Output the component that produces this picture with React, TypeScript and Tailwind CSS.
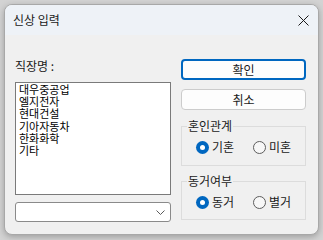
const FONT = { fontFamily: '"Noto Sans CJK KR", "Noto Sans", sans-serif' };

const COMPANIES = ['대우중공업', '엘지전자', '현대건설', '기아자동차', '한화화학', '기타'];

function Radio({ checked, label }: { checked: boolean; label: string }) {
  return (
    <div className="flex items-center gap-[3px] whitespace-nowrap">
      {checked ? (
        <div className="flex size-[13px] shrink-0 items-center justify-center rounded-full bg-[#0067c0]">
          <div className="size-[5px] rounded-full bg-white" />
        </div>
      ) : (
        <div className="size-[13px] shrink-0 rounded-full border border-[#5d5d5d] bg-[#f7f7f7]" />
      )}
      <span className="text-[12px] leading-[14px] text-[#1a1a1a]">{label}</span>
    </div>
  );
}

function GroupBox({ title, h, items }: { title: string; h: string; items: [string, boolean][] }) {
  return (
    <div className={`relative border border-[#dcdcdc] ${h}`}>
      <span className="absolute left-[5px] top-[-8px] bg-[#f0f0f0] px-[1px] text-[12px] leading-[14px] text-[#1a1a1a]">
        {title}
      </span>
      <div className="flex pl-[14px] pt-[13px]">
        {items.map(([label, checked]) => (
          <div key={label} className="w-[57px] shrink-0">
            <Radio checked={checked} label={label} />
          </div>
        ))}
      </div>
    </div>
  );
}

export default function App() {
  return (
    <div className="h-[240px] w-[323px] bg-[#d3d3d3] pl-[4px] pt-[4px]" style={FONT}>
      <div className="flex h-[231px] w-[315px] flex-col overflow-hidden rounded-[8px] border border-[#a8a8a8] bg-[#f0f0f0] shadow-[0_2px_6px_rgba(0,0,0,0.25)]">
        <div className="flex h-[30px] shrink-0 items-center justify-between bg-[#eef2f7] pl-[8px] pr-[9px]">
          <span className="text-[12px] leading-[14px] text-[#1a1a1a]">신상 입력</span>
          <svg width="11" height="11" viewBox="0 0 11 11">
            <path d="M0.5 0.5 L10.5 10.5 M10.5 0.5 L0.5 10.5" stroke="#1a1a1a" strokeWidth="1" />
          </svg>
        </div>

        <div className="flex gap-[10px] pl-[10px]">
          <div className="flex w-[156px] flex-col">
            <span className="mt-[24px] mb-[9px] text-[12px] leading-[14px] text-[#1a1a1a]">직장명 :</span>
            <div className="h-[113px] border border-[#7a7a7a] bg-white pl-[3px]">
              {COMPANIES.map((c) => (
                <div key={c} className="text-[11px] leading-[12.2px] text-black">
                  {c}
                </div>
              ))}
            </div>
            <div className="mt-[7px] flex h-[20px] items-center justify-end rounded-[3px] border border-[#8a8a8a] bg-white pr-[5px]">
              <svg width="9" height="5" viewBox="0 0 9 5">
                <path d="M0.5 0.5 L4.5 4.5 L8.5 0.5" fill="none" stroke="#5a5a5a" strokeWidth="1" />
              </svg>
            </div>
          </div>

          <div className="flex w-[125px] flex-col">
            <button className="mt-[24px] h-[21px] rounded-[4px] border-2 border-[#0067c0] bg-[#fdfdfd] text-[12px] leading-[14px] text-[#1a1a1a]">
              확인
            </button>
            <button className="mt-[9px] h-[21px] rounded-[4px] border border-[#cccccc] bg-[#fdfdfd] text-[12px] leading-[14px] text-[#1a1a1a]">
              취소
            </button>
            <div className="mt-[16px]">
              <GroupBox title="혼인관계" h="h-[40px]" items={[['기혼', true], ['미혼', false]]} />
            </div>
            <div className="mt-[15px]">
              <GroupBox title="동거여부" h="h-[39px]" items={[['동거', true], ['별거', false]]} />
            </div>
          </div>
        </div>
      </div>
    </div>
  );
}
